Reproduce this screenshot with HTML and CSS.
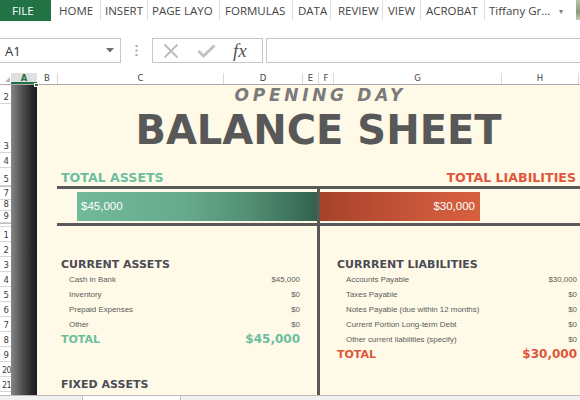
FILE: index.html
```html
<!DOCTYPE html>
<html>
<head>
<meta charset="utf-8">
<title>Opening Day Balance Sheet</title>
<link rel="stylesheet" href="styles.css">
</head>
<body>
<div class="app">
  <header class="ribbon">
    <div class="tab file">FILE</div>
    <div class="tab t-home">HOME</div>
    <div class="tab t-insert">INSERT</div>
    <div class="tab t-page">PAGE LAYO</div>
    <div class="tab t-formulas">FORMULAS</div>
    <div class="tab t-data">DATA</div>
    <div class="tab t-review">REVIEW</div>
    <div class="tab t-view">VIEW</div>
    <div class="tab t-acrobat">ACROBAT</div>
    <div class="tab t-user">Tiffany Gr...<span class="caret">&#9662;</span></div>
    <div class="avatar"></div>
  </header>

  <div class="formula-bar">
    <div class="namebox">
      <span class="cellref">A1</span>
      <svg class="nb-arrow" width="8" height="5" viewBox="0 0 8 5"><path d="M0 0H8L4 4.5Z" fill="#6d6d6d"/></svg>
    </div>
    <svg class="grip" width="3" height="11" viewBox="0 0 3 11"><rect x="0.5" y="0" width="2" height="2" fill="#a6a6a6"/><rect x="0.5" y="4.5" width="2" height="2" fill="#a6a6a6"/><rect x="0.5" y="9" width="2" height="2" fill="#a6a6a6"/></svg>
    <div class="fx-buttons">
      <svg class="ico-x" width="16" height="16" viewBox="0 0 16 16"><path d="M1.5 1.5L14.5 14.5M14.5 1.5L1.5 14.5" stroke="#bdbdbd" stroke-width="2" fill="none"/></svg>
      <svg class="ico-check" width="19" height="14" viewBox="0 0 19 14"><path d="M1.5 7L6.5 12L17.5 1.5" stroke="#c2c2c2" stroke-width="3" fill="none"/></svg>
      <span class="fx">fx</span>
    </div>
    <div class="formula-input"></div>
  </div>

  <div class="col-headers">
    <div class="corner"><svg width="5" height="5" viewBox="0 0 5 5"><path d="M5 0V5H0Z" fill="#b4b4b4"/></svg></div>
    <div class="ch c-a">A</div>
    <div class="ch c-b">B</div>
    <div class="ch c-c">C</div>
    <div class="ch c-d">D</div>
    <div class="ch c-e">E</div>
    <div class="ch c-f">F</div>
    <div class="ch c-g">G</div>
    <div class="ch c-h">H</div>
    <div class="ch c-i"></div>
  </div>

  <div class="grid-area">
    <div class="row-headers">
      <div class="rh r19">2</div>
      <div class="rh r49">3</div>
      <div class="rh">4</div>
      <div class="rh r18">5</div>
      <div class="rh r14 hidden-above">7</div>
      <div class="rh r11">8</div>
      <div class="rh r12">9</div>
      <div class="rh r4 hidden-above"></div>
      <div class="rh">1</div>
      <div class="rh">2</div>
      <div class="rh">3</div>
      <div class="rh">4</div>
      <div class="rh">5</div>
      <div class="rh">6</div>
      <div class="rh">7</div>
      <div class="rh">8</div>
      <div class="rh">9</div>
      <div class="rh two">20</div>
      <div class="rh two">21</div>
    </div>
    <div class="col-a"><span class="fill-handle"></span></div>

    <main class="sheet">
      <div class="opening">OPENING DAY</div>
      <h1 class="title">BALANCE SHEET</h1>

      <div class="total-labels">
        <span class="lbl-assets">TOTAL ASSETS</span>
        <span class="lbl-liab">TOTAL LIABILITIES</span>
      </div>

      <div class="board">
        <div class="bar-cell left">
          <div class="bar green">$45,000</div>
        </div>
        <div class="divider"></div>
        <div class="bar-cell right">
          <div class="bar red">$30,000</div>
        </div>

        <section class="section left">
          <div class="sec-head">CURRENT ASSETS</div>
          <div class="item"><span>Cash in Bank</span><span>$45,000</span></div>
          <div class="item"><span>Inventory</span><span>$0</span></div>
          <div class="item"><span>Prepaid Expenses</span><span>$0</span></div>
          <div class="item"><span>Other</span><span>$0</span></div>
          <div class="total-row assets"><span class="t-lbl">TOTAL</span><span class="t-val">$45,000</span></div>
          <div class="sec-head fixed">FIXED ASSETS</div>
        </section>

        <section class="section right">
          <div class="sec-head">CURRRENT LIABILITIES</div>
          <div class="item"><span>Accounts Payable</span><span>$30,000</span></div>
          <div class="item"><span>Taxes Payable</span><span>$0</span></div>
          <div class="item"><span>Notes Payable (due within 12 months)</span><span>$0</span></div>
          <div class="item"><span>Current Portion Long-term Debt</span><span>$0</span></div>
          <div class="item"><span>Other current liabilities (specify)</span><span>$0</span></div>
          <div class="total-row liab"><span class="t-lbl">TOTAL</span><span class="t-val">$30,000</span></div>
        </section>
      </div>
    </main>
  </div>

  <footer class="sheet-tabs">
    <div class="stab first"></div>
    <div class="stab active"></div>
  </footer>
</div>
</body>
</html>
```
FILE: styles.css
```css
* { box-sizing: border-box; margin: 0; padding: 0; }
html, body { width: 580px; height: 400px; overflow: hidden; background: #ffffff; }
body { font-family: "Open Sans", "Noto Sans", sans-serif; color: #444444; }

.app { display: flex; flex-direction: column; width: 580px; height: 400px; }

/* ---------- ribbon ---------- */
.ribbon { display: flex; height: 21px; flex: none; font-size: 11.5px; }
.tab {
  display: flex; align-items: center; height: 20px;
  white-space: nowrap; overflow: hidden;
  color: #444444; border-left: 1px solid #dedede; padding-left: 4px;
}
.tab.file { width: 51px; height: 21px; background: #217346; color: #ffffff; border-left: 0; padding-left: 12px; }
.t-home { width: 49px; border-left: 0; padding-left: 8px; }
.t-insert { width: 47px; }
.t-page { width: 72px; }
.t-formulas { width: 73px; padding-left: 5px; }
.t-data { width: 38px; padding-left: 5px; }
.t-review { width: 52px; padding-left: 7px; }
.t-view { width: 38px; padding-left: 5px; }
.t-acrobat { width: 64px; padding-left: 5px; }
.t-user { width: 92px; padding-left: 4px; }
.caret { font-size: 8px; color: #808080; margin-left: 9px; }
.avatar { margin-left: auto; width: 4px; height: 20px; background: linear-gradient(#b9c3a8, #8d9a7c 60%, #c9cbb9); }

/* ---------- formula bar ---------- */
.formula-bar { display: flex; align-items: center; height: 52px; padding: 17px 0 10px; flex: none; }
.namebox {
  display: flex; align-items: center; justify-content: space-between;
  width: 122px; height: 25px; margin-left: -1px;
  border: 1px solid #c6c6c6; padding: 0 6px 0 5px;
}
.cellref { font-size: 13px; color: #333333; }
.grip { margin-left: 14px; }
.fx-buttons {
  display: flex; align-items: center;
  width: 111px; height: 25px; margin-left: 14px;
  border: 1px solid #c6c6c6; padding-left: 10px;
}
.ico-check { margin-left: 18px; }
.fx { margin-left: 17px; font-family: "Liberation Serif", "DejaVu Serif", serif; font-style: italic; font-size: 19px; color: #555555; line-height: 1; }
.formula-input { flex: 1; height: 25px; margin-left: 3px; margin-right: -2px; border: 1px solid #c6c6c6; }

/* ---------- column headers ---------- */
.col-headers {
  display: flex; height: 12px; flex: none;
  border-bottom: 1px solid #ababab;
  font-family: "DejaVu Sans", sans-serif; font-size: 8.5px; color: #444444;
}
.corner { width: 11px; display: flex; align-items: flex-end; justify-content: flex-end; padding: 0 1px 2px 0; }
.ch { display: flex; align-items: center; justify-content: center; border-right: 1px solid #d8d8d8; line-height: 1; }
.c-a { width: 26px; background: #e0e0e0; color: #217346; font-weight: bold; box-shadow: inset 0 -2px 0 #217346; border-right: 0; }
.c-b { width: 21px; }
.c-c { width: 166px; }
.c-d { width: 79px; }
.c-e { width: 16px; }
.c-f { width: 15px; }
.c-g { width: 168px; }
.c-h { width: 77px; }
.c-i { flex: 1; border-right: 0; }

/* ---------- grid area ---------- */
.grid-area { display: flex; height: 310px; flex: none; }
.row-headers { width: 11px; overflow: hidden; display: flex; flex-direction: column; font-family: "DejaVu Sans", sans-serif; font-size: 8.5px; color: #3c3c3c; }
.rh {
  display: flex; align-items: flex-end; justify-content: flex-end;
  height: 15px; flex: none; padding: 0 2px 1px 0; line-height: 9px;
  border-bottom: 1px solid #d6d6d6;
}
.rh.two { padding-right: 0; font-size: 8px; letter-spacing: -0.6px; }
.r19 { height: 19px; }
.r49 { height: 49px; }
.r18 { height: 18px; }
.r14 { height: 14px; }
.r11 { height: 11px; }
.r12 { height: 12px; }
.r4 { height: 4px; }
.hidden-above { border-top: 1px solid #c0c0c0; }

.col-a { position: relative; width: 26px; background: linear-gradient(to right, #858585, #4e4e4e 45%, #282828 80%, #1c1c1c); }
.fill-handle { position: absolute; right: -2px; top: -2px; width: 5px; height: 4px; background: #217346; border: 1px solid #ffffff; }

/* ---------- sheet ---------- */
.sheet { flex: 1; display: flex; flex-direction: column; background: #fefae7; padding-left: 20px; overflow: hidden; }

.opening {
  height: 20px; line-height: 20px; text-align: center;
  font-family: "DejaVu Sans", sans-serif; font-weight: bold; font-style: italic;
  font-size: 17px; letter-spacing: 3.7px; padding-left: 3.7px; color: #7b7b7b;
}
.title {
  margin-top: 1px; height: 48px; line-height: 48px; text-align: center;
  font-family: "DejaVu Sans", sans-serif; font-weight: bold; font-size: 40px; color: #585858;
}
.total-labels {
  display: flex; justify-content: space-between;
  margin-top: 15px; height: 17px; line-height: 17px; padding: 0 4px;
  font-family: "DejaVu Sans", sans-serif; font-weight: bold; font-size: 12.6px;
}
.lbl-assets { color: #6cbe9f; }
.lbl-liab { color: #e0573b; }

.board {
  flex: 1; display: grid;
  grid-template-columns: 260px 3px 260px; grid-template-rows: auto 1fr;
  border-top: 3px solid #595959;
}
.bar-cell { padding: 3px 0 2px; border-bottom: 3px solid #595959; }
.bar-cell.left { padding-left: 20px; }
.bar { height: 29px; line-height: 29px; font-family: "Liberation Sans", sans-serif; font-size: 11.5px; color: #ffffff; }
.bar.green { width: 240px; padding-left: 4px; background: linear-gradient(to right, #72b99a, #67aa8d 45%, #528f74 72%, #3e735c 90%, #33604c); }
.bar.red { width: 160px; padding-right: 5px; text-align: right; background: linear-gradient(to right, #a6422a, #bd4f35 40%, #d05c3d 80%, #d4603f); }
.divider { grid-column: 2; grid-row: 1 / span 2; background: #595959; }

.section { padding-top: 31px; }
.section.left { padding-left: 4px; padding-right: 17px; }
.section.right { padding-left: 17px; padding-right: 3px; }
.sec-head {
  height: 15px; line-height: 15px;
  font-family: "DejaVu Sans", sans-serif; font-weight: bold; font-size: 11px; color: #4b4b56;
}
.sec-head.fixed { margin-top: 30px; }
.item {
  display: flex; justify-content: space-between; height: 15px; line-height: 15px;
  padding-left: 8px; font-family: "Liberation Sans", sans-serif; font-size: 7.9px; color: #5a5a5a;
}
.section.right .item { padding-left: 9px; }
.total-row {
  display: flex; justify-content: space-between; align-items: baseline;
  height: 15px; line-height: 15px;
  font-family: "DejaVu Sans", sans-serif; font-weight: bold;
}
.t-lbl { font-size: 11px; }
.t-val { font-size: 12px; }
.total-row.assets { color: #6cbe9f; }
.total-row.liab { color: #de553a; }

/* ---------- sheet tabs ---------- */
.sheet-tabs { display: flex; height: 5px; flex: none; background: #f1f1f1; border-top: 1px solid #bdbdbd; }
.stab { height: 100%; border-right: 1px solid #c6c6c6; }
.stab.first { width: 83px; }
.stab.active { width: 98px; background: #ffffff; }
```
